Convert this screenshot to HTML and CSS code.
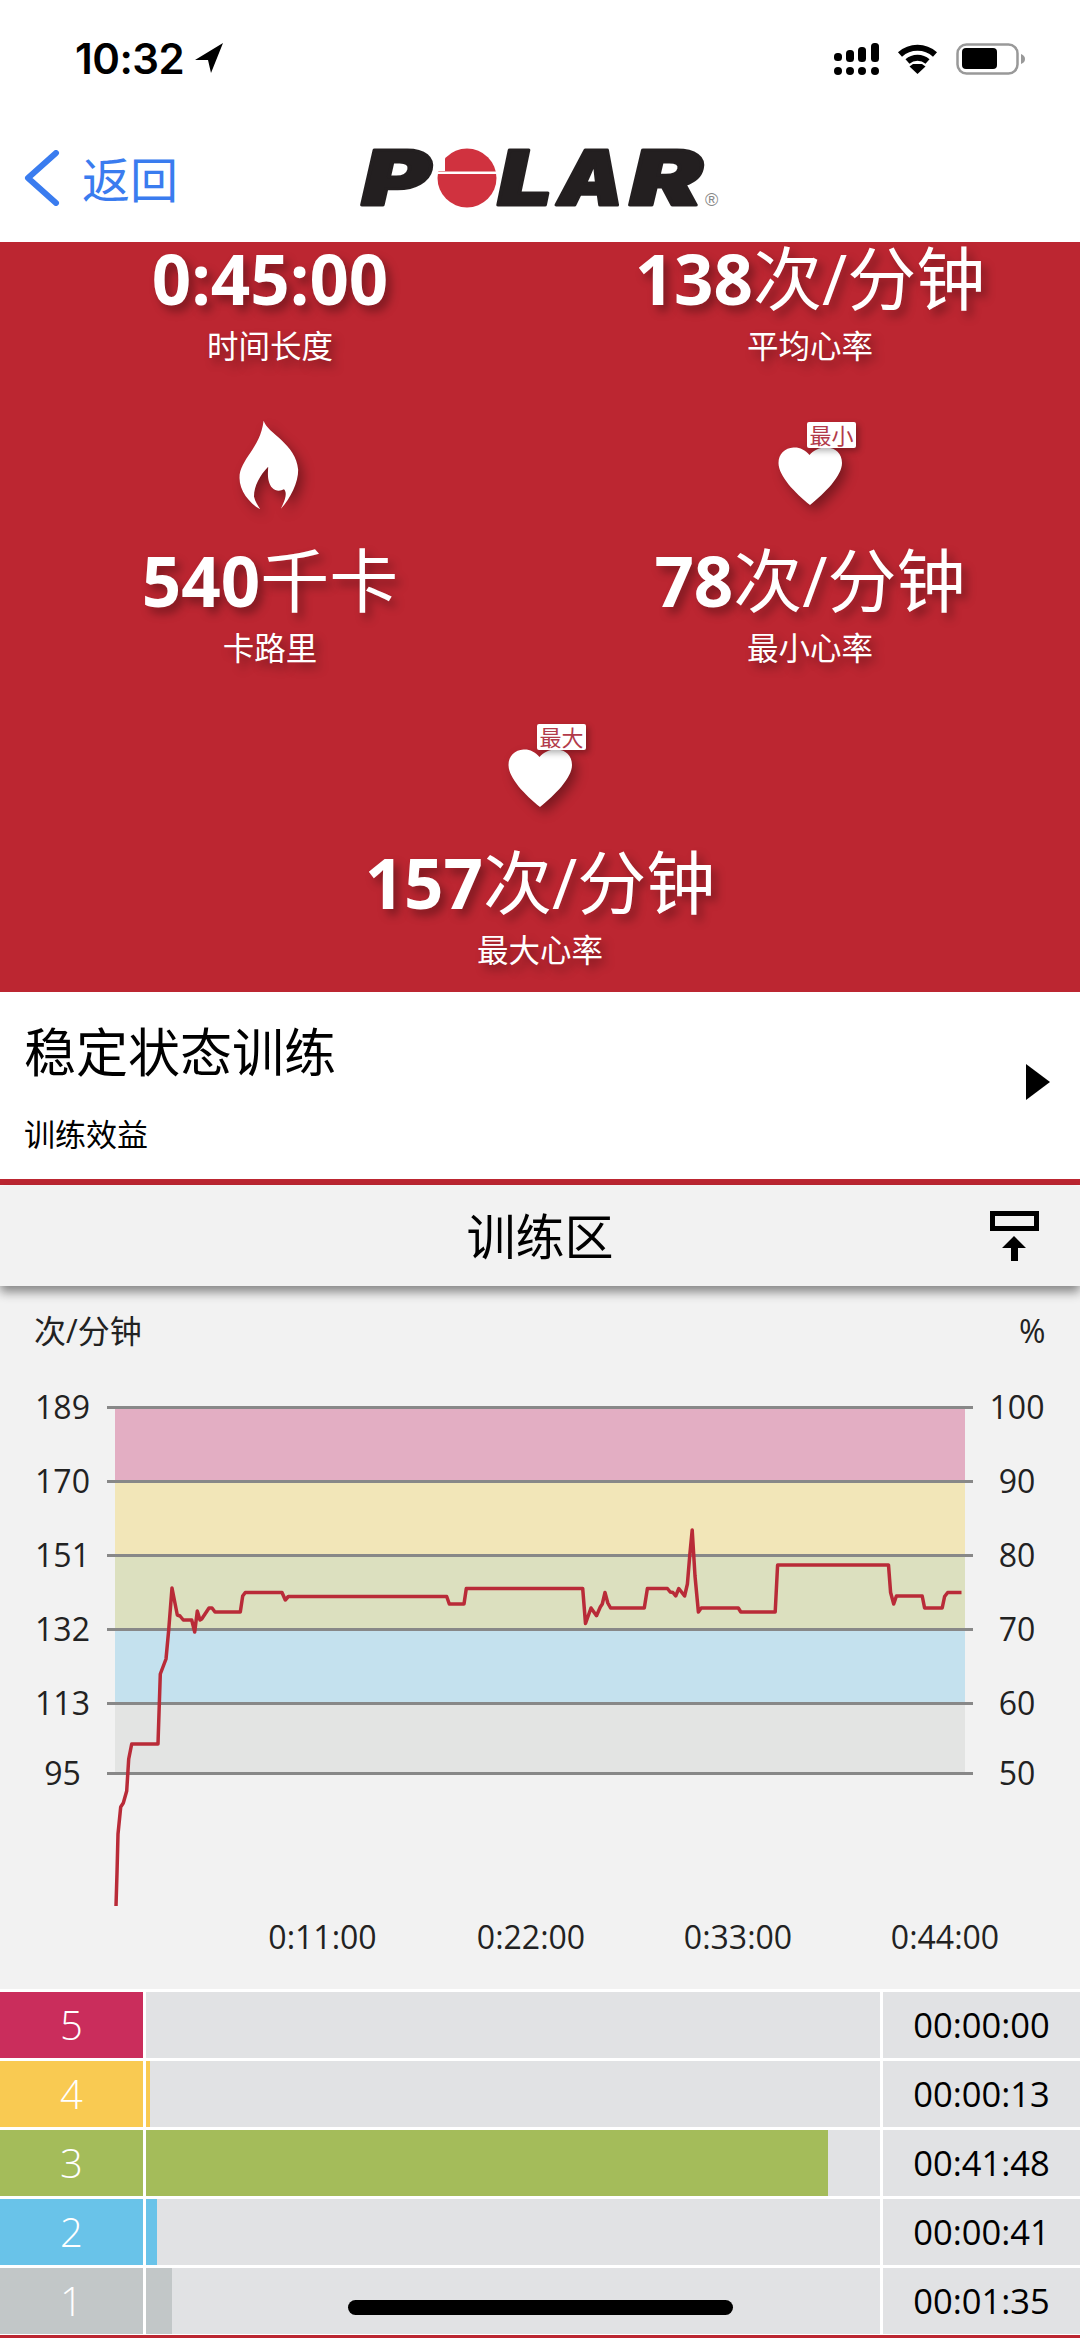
FILE: index.html
```html
<!DOCTYPE html>
<html lang="zh-CN">
<head>
    <meta charset="UTF-8">
    <meta name="viewport" content="width=device-width, initial-scale=1.0">
    <title>训练区</title>
    <link rel="stylesheet" href="styles.css">
</head>
<body>
    <div class="status-bar">
        <div class="status-time">
            <span>10:32</span>
            <svg width="28" height="30" viewBox="0 0 28 30"><polygon points="28,0 0,17 13,17 16,30" fill="#000"/></svg>
        </div>
        <div class="status-icons">
            <svg width="45" height="32" viewBox="0 0 45 32" fill="#000">
                <rect x="0" y="10" width="8" height="8" rx="3.5"/>
                <rect x="12" y="7" width="8" height="12" rx="3.5"/>
                <rect x="24" y="4" width="8" height="15" rx="3.5"/>
                <rect x="37" y="0" width="8" height="19" rx="3.5"/>
                <rect x="0" y="24" width="8" height="8" rx="4"/>
                <rect x="12" y="24" width="8" height="8" rx="4"/>
                <rect x="24" y="24" width="8" height="8" rx="4"/>
                <rect x="37" y="24" width="8" height="8" rx="4"/>
            </svg>
            <svg width="41" height="32" viewBox="0 0 41 32">
                <path d="M3 11.5 C13 2.5 28 2.5 38 11.5" fill="none" stroke="#000" stroke-width="6"/>
                <path d="M10.5 18.5 C16 13.5 25 13.5 30.5 18.5" fill="none" stroke="#000" stroke-width="6"/>
                <polygon points="20.5,31 12.5,23.5 16,21 25,21 28.5,23.5" fill="#000"/>
            </svg>
            <svg width="69" height="32" viewBox="0 0 69 32">
                <rect x="1.5" y="1.5" width="60" height="29" rx="9" fill="none" stroke="#999" stroke-width="2.5"/>
                <rect x="6" y="5" width="35" height="21" rx="4" fill="#000"/>
                <path d="M65 11 C68 12 69 14 69 16 C69 18 68 20 65 21 Z" fill="#999"/>
            </svg>
        </div>
    </div>

    <div class="nav-bar">
        <div class="nav-back">
            <svg width="36" height="56" viewBox="0 0 36 56"><polyline points="32,3 4,28 32,53" fill="none" stroke="#3a7cef" stroke-width="6" stroke-linecap="round" stroke-linejoin="round"/></svg>
            <span>返回</span>
        </div>
        <svg class="nav-logo" width="400" height="150" viewBox="340 90 400 150" role="img" aria-label="Polar">
            <g class="logo-letters">
                <text x="362" y="205" textLength="68" lengthAdjust="spacingAndGlyphs">P</text>
                <text x="498" y="205" textLength="54" lengthAdjust="spacingAndGlyphs">L</text>
                <text x="558" y="205" textLength="65" lengthAdjust="spacingAndGlyphs">A</text>
                <text x="630" y="205" textLength="72" lengthAdjust="spacingAndGlyphs">R</text>
            </g>
            <circle cx="467" cy="178" r="29.5" fill="#d0323f"/>
            <rect x="437" y="171.5" width="62" height="2.5" fill="#fff"/>
            <rect x="437" y="149" width="8" height="22" fill="#fff"/>
            <text class="logo-mark" x="705" y="206">®</text>
        </svg>
    </div>

    <section class="stats">
        <div class="stat first">
            <div class="stat-value"><b>0:45:00</b></div>
            <div class="stat-label">时间长度</div>
        </div>
        <div class="stat first">
            <div class="stat-value"><b>138</b>次/分钟</div>
            <div class="stat-label">平均心率</div>
        </div>
        <div class="stat">
            <div class="stat-icon">
                <svg class="flame" width="60" height="90" viewBox="15 12 57 87"><path d="M38.3 12.7 C42 25 70 35 71.7 60 C72 72 64 88 55 97.7 C60 88 61 82 58 79 C52 82 45 80 43 70 C42 65 42.7 60 42.7 57.3 C35 65 29 76 29 86 C30 91 33 95 35 98.3 C24 92 15 80 15 68 C15 50 35 40 38.3 12.7 Z" fill="#fff"/></svg>
            </div>
            <div class="stat-value"><b>540</b>千卡</div>
            <div class="stat-label">卡路里</div>
        </div>
        <div class="stat">
            <div class="stat-icon">
                <svg class="heart" width="64" height="58" viewBox="13 37 64 58"><path d="M44.5 45 C40 39.5 34 37 28.5 37.5 C20 38 13.5 44 13.5 53 C13.5 66 30 83 45 95 C60 83 77 66 77 53 C77 44 71 38 62 37.5 C56 37 49 39.5 44.5 45 Z" fill="#fff"/></svg>
                <span class="stat-badge">最小</span>
            </div>
            <div class="stat-value"><b>78</b>次/分钟</div>
            <div class="stat-label">最小心率</div>
        </div>
        <div class="stat wide">
            <div class="stat-icon">
                <svg class="heart" width="64" height="58" viewBox="13 37 64 58"><path d="M44.5 45 C40 39.5 34 37 28.5 37.5 C20 38 13.5 44 13.5 53 C13.5 66 30 83 45 95 C60 83 77 66 77 53 C77 44 71 38 62 37.5 C56 37 49 39.5 44.5 45 Z" fill="#fff"/></svg>
                <span class="stat-badge">最大</span>
            </div>
            <div class="stat-value"><b>157</b>次/分钟</div>
            <div class="stat-label">最大心率</div>
        </div>
    </section>

    <section class="benefit">
        <div>
            <div class="benefit-title">稳定状态训练</div>
            <div class="benefit-sub">训练效益</div>
        </div>
        <svg class="benefit-arrow" width="24" height="36" viewBox="0 0 24 36"><polygon points="0,0 24,18 0,36" fill="#000"/></svg>
    </section>

    <header class="zone-header">
        <span></span>
        <h2>训练区</h2>
        <svg class="zone-toggle" width="50" height="50" viewBox="0 0 50 50">
            <rect x="2.5" y="2.5" width="44" height="15" fill="none" stroke="#000" stroke-width="5"/>
            <polygon points="24,25 36,37 28,37 28,50 21,50 21,37 12,37" fill="#000"/>
        </svg>
    </header>

    <svg class="chart" width="1080" height="703" viewBox="0 1286 1080 703">
        <rect x="115" y="1407" width="850" height="74" fill="#e3aec3"/>
        <rect x="115" y="1481" width="850" height="74" fill="#f2e6b8"/>
        <rect x="115" y="1555" width="850" height="74" fill="#dce0bf"/>
        <rect x="115" y="1629" width="850" height="74" fill="#c4e1ee"/>
        <rect x="115" y="1703" width="850" height="70" fill="#e3e4e3"/>
        <g stroke="#888" stroke-width="3">
            <line x1="107" x2="973" y1="1407.5" y2="1407.5"/>
            <line x1="107" x2="973" y1="1481.5" y2="1481.5"/>
            <line x1="107" x2="973" y1="1555.5" y2="1555.5"/>
            <line x1="107" x2="973" y1="1629.5" y2="1629.5"/>
            <line x1="107" x2="973" y1="1703.5" y2="1703.5"/>
            <line x1="107" x2="973" y1="1773.5" y2="1773.5"/>
        </g>
        <polyline fill="none" stroke="#b92b38" stroke-width="3.5" stroke-linejoin="round" points="116,1906 117,1873 118,1834 120.7,1807 123.3,1803 126.7,1791 128.7,1759 131.7,1744 158,1744 160.3,1674 166,1659 168.7,1630 172,1588 177.3,1615 180,1616 183.3,1620 191.7,1620 194.7,1632 197.3,1611 200,1620 201.7,1619 209,1608 212,1608 215,1612 240.3,1612 242.7,1596 245.3,1592.5 282,1592.5 285.3,1600 288.3,1596.5 446.7,1596.5 449.3,1604 464,1604 466.3,1588.5 582.7,1588.5 585.5,1623.5 591,1608 596.5,1615.7 600.3,1607 602.3,1604 605,1592.5 607.8,1603 610.6,1608 644.3,1608 647.4,1588.5 667.4,1588.5 670.2,1592 672.9,1592.5 675.7,1596 678.8,1588.5 684.6,1596 687.4,1584 689.8,1555 692.2,1530 695,1576 698.4,1612 701.2,1608 738.3,1608 740.8,1612 775.2,1612 777.6,1565 888.5,1565 890.6,1592.5 893.7,1604 896.4,1596 922.2,1596 924.6,1608 942.2,1608 944.6,1596.5 947.7,1592.5 961.5,1592.5"/>
        <g class="chart-text">
            <text x="34" y="1343">次/分钟</text>
            <text x="1019" y="1343">%</text>
        </g>
        <g class="chart-text mid">
            <text x="62.5" y="1419">189</text>
            <text x="62.5" y="1493">170</text>
            <text x="62.5" y="1567">151</text>
            <text x="62.5" y="1641">132</text>
            <text x="62.5" y="1715">113</text>
            <text x="62.5" y="1785">95</text>
            <text x="1017" y="1419">100</text>
            <text x="1017" y="1493">90</text>
            <text x="1017" y="1567">80</text>
            <text x="1017" y="1641">70</text>
            <text x="1017" y="1715">60</text>
            <text x="1017" y="1785">50</text>
            <text x="322.5" y="1949">0:11:00</text>
            <text x="531" y="1949">0:22:00</text>
            <text x="738" y="1949">0:33:00</text>
            <text x="945" y="1949">0:44:00</text>
        </g>
    </svg>

    <section class="zones">
        <div class="zone">
            <div class="zone-num z5">5</div>
            <div class="zone-track"></div>
            <div class="zone-time">00:00:00</div>
        </div>
        <div class="zone">
            <div class="zone-num z4">4</div>
            <div class="zone-track"><div class="zone-bar z4" style="width: 0.5%"></div></div>
            <div class="zone-time">00:00:13</div>
        </div>
        <div class="zone">
            <div class="zone-num z3">3</div>
            <div class="zone-track"><div class="zone-bar z3" style="width: 92.9%"></div></div>
            <div class="zone-time">00:41:48</div>
        </div>
        <div class="zone">
            <div class="zone-num z2">2</div>
            <div class="zone-track"><div class="zone-bar z2" style="width: 1.5%"></div></div>
            <div class="zone-time">00:00:41</div>
        </div>
        <div class="zone">
            <div class="zone-num z1">1</div>
            <div class="zone-track"><div class="zone-bar z1" style="width: 3.5%"></div></div>
            <div class="zone-time">00:01:35</div>
        </div>
    </section>

    <div class="home-indicator"></div>
</body>
</html>
```

FILE: styles.css
```css
* {
    box-sizing: border-box;
}

html, body {
    margin: 0;
    padding: 0;
}

body {
    position: relative;
    width: 1080px;
    height: 2338px;
    overflow: hidden;
    background-color: #fff;
    font-family: 'Open Sans', 'Noto Sans CJK SC', sans-serif;
    color: #000;
}

svg {
    display: block;
}

.status-bar {
    display: flex;
    justify-content: space-between;
    align-items: flex-start;
    height: 88px;
    padding: 43px 55px 0 75px;
}

.status-time {
    display: flex;
    align-items: flex-start;
    gap: 11px;
    font-family: 'Inter', sans-serif;
    font-size: 42px;
    font-weight: 600;
    line-height: 31px;
    letter-spacing: -0.5px;
}

.status-icons {
    display: flex;
    gap: 18px;
}

.nav-bar {
    display: flex;
    align-items: flex-start;
    height: 154px;
}

.nav-back {
    display: flex;
    align-items: center;
    gap: 22px;
    height: 56px;
    margin: 62px 0 0 24px;
    color: #3a7cef;
    font-size: 48px;
}

.nav-back span {
    margin-bottom: 3px;
}

.nav-logo {
    margin: 2px 0 0 162px;
}

.logo-letters text {
    font-family: 'Inter', 'Liberation Sans', sans-serif;
    font-size: 76px;
    font-weight: 900;
    font-style: italic;
    fill: #231f20;
    stroke: #231f20;
    stroke-width: 3;
    stroke-linejoin: round;
}

.logo-mark {
    font-family: 'Liberation Sans', sans-serif;
    font-size: 18px;
    fill: #888;
}

.stats {
    display: grid;
    grid-template-columns: 1fr 1fr;
    align-content: start;
    height: 750px;
    background-color: #bc2631;
    color: #fff;
    text-shadow: 5px 6px 10px rgba(0, 0, 0, 0.35);
}

.stat {
    display: flex;
    flex-direction: column;
    align-items: center;
    height: 302px;
    padding-top: 32px;
}

.stat.first {
    height: 157px;
    margin-top: -9px;
    padding-top: 0;
}

.stat.wide {
    grid-column: 1 / 3;
    height: 298px;
}

.stat-icon {
    position: relative;
    display: flex;
    justify-content: center;
    align-items: flex-start;
    width: 110px;
    height: 88px;
    margin-bottom: 25px;
}

.flame, .heart {
    filter: drop-shadow(5px 6px 6px rgba(0, 0, 0, 0.35));
}

.flame {
    margin: -2px 3px 0 0;
}

.heart {
    margin-top: 25px;
}

.stat-badge {
    position: absolute;
    left: 52px;
    top: 0;
    width: 49px;
    height: 26px;
    border-radius: 2px;
    background-color: #fff;
    color: #b23a4a;
    font-size: 22px;
    line-height: 26px;
    text-align: center;
    text-shadow: none;
    box-shadow: 3px 3px 6px rgba(0, 0, 0, 0.3);
}

.stat-value {
    height: 90px;
    font-size: 69px;
    line-height: 90px;
    white-space: nowrap;
}

.stat-value b {
    font-weight: 700;
}

.stat-label {
    height: 46px;
    font-size: 31.5px;
    line-height: 46px;
}

.benefit {
    display: flex;
    justify-content: space-between;
    align-items: center;
    height: 193px;
    padding: 0 30px 0 24px;
    border-bottom: 6px solid #bc2631;
}

.benefit-title {
    height: 62px;
    margin: 6px 0 28px;
    font-size: 52px;
    line-height: 62px;
}

.benefit-sub {
    font-size: 31px;
    line-height: 46px;
}

.benefit-arrow {
    margin-bottom: 8px;
}

.zone-header {
    position: relative;
    z-index: 2;
    display: grid;
    grid-template-columns: 1fr auto 1fr;
    align-items: center;
    height: 100px;
    margin-top: 1px;
    background-color: #f2f2f2;
    box-shadow: 0 6px 10px rgba(0, 0, 0, 0.45);
}

.zone-header h2 {
    margin: 0;
    font-size: 49px;
    font-weight: 400;
    line-height: 60px;
}

.zone-toggle {
    justify-self: end;
    margin-right: 40px;
}

.chart {
    background-color: #f2f2f2;
}

.chart-text {
    font-size: 32px;
    fill: #222;
}

.chart-text.mid {
    text-anchor: middle;
}

.zones {
    display: flex;
    flex-direction: column;
    gap: 3px;
    height: 349px;
    padding-top: 3px;
    border-bottom: 3px solid #bc2631;
    background-color: #fff;
}

.zone {
    display: grid;
    grid-template-columns: 143px 734px 197px;
    gap: 3px;
    height: 66px;
}

.zone-num {
    color: #fff;
    font-size: 40px;
    font-weight: 300;
    line-height: 66px;
    text-align: center;
}

.zone-track {
    background-color: #e1e2e4;
}

.zone-bar {
    height: 100%;
}

.zone-time {
    background-color: #e1e2e4;
    font-size: 34.5px;
    line-height: 66px;
    text-align: center;
}

.z5 { background-color: #ca2d5c; }
.z4 { background-color: #f9ca52; }
.z3 { background-color: #a4bc5a; }
.z2 { background-color: #69c3e9; }
.z1 { background-color: #c2c7c8; }

.home-indicator {
    position: absolute;
    left: 348px;
    top: 2300px;
    width: 385px;
    height: 15px;
    border-radius: 8px;
    background-color: #000;
}
```
